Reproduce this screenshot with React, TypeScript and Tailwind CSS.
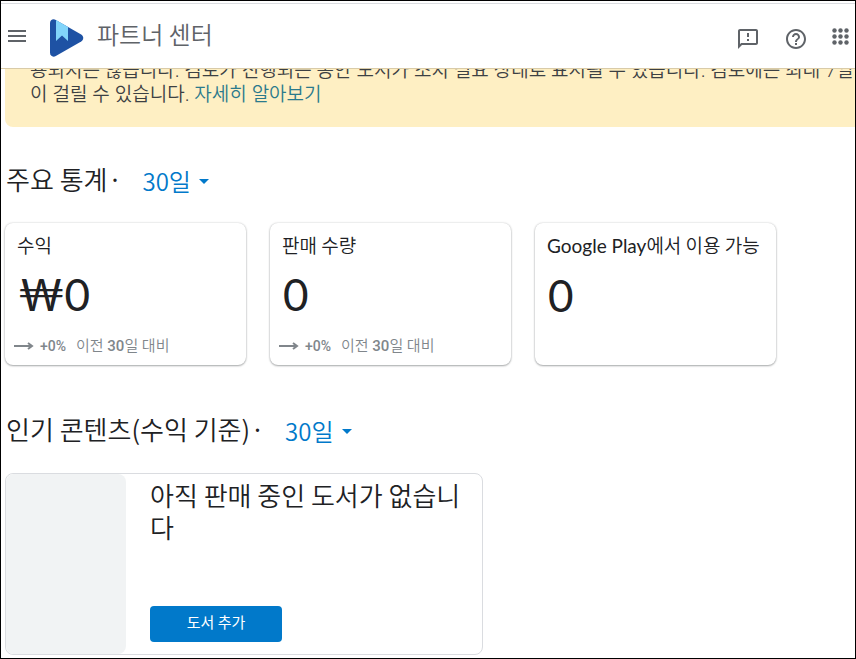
import { useId, type ReactNode } from "react";

const KR = "font-['Noto_Sans_CJK_KR',sans-serif]";
const NOTICE = "font-['Noto_Sans','Noto_Sans_CJK_KR',sans-serif]";
const LATIN = "font-[Lato,'Noto_Sans_CJK_KR',sans-serif]";
const SMALL = "font-[Roboto,'Noto_Sans_CJK_KR',sans-serif]";

function BooksLogo() {
  return (
    <svg width="34" height="38" viewBox="0 0 34 38" aria-hidden="true">
      <path
        d="M0 4.2C0 1 3 -0.6 5.8 1L31.2 15.6C33.9 17.2 33.9 20.8 31.2 22.4L5.8 37C3 38.6 0 37 0 33.8Z"
        fill="#1e52a4"
      />
      <path d="M6 1.1L18 8V22L12 16.6L6 22Z" fill="#81d4fa" />
    </svg>
  );
}

function Header() {
  return (
    <header className="relative z-10 flex h-[65px] items-center border-b border-[#d9cba8] bg-white pr-1.5 pl-1.5 text-[#5f6368]">
      <button type="button" aria-label="메뉴" className="flex w-5 justify-center">
        <svg width="18" height="12" viewBox="0 0 18 12" fill="currentColor">
          <path d="M0 0h18v2H0zM0 5h18v2H0zM0 10h18v2H0z" />
        </svg>
      </button>
      <a href="#" className="ml-[23px] flex items-start gap-[13px] pt-1">
        <BooksLogo />
        <span className="text-2xl leading-[30px] font-[350]">파트너 센터</span>
      </a>
      <div className="ml-auto flex items-center pt-1.5">
        <button type="button" aria-label="의견 보내기">
          <svg width="24" height="24" viewBox="0 0 24 24" fill="currentColor">
            <path d="M20 2H4c-1.100 0-1.990.9-1.990 2L2 22l4-4h14c1.100 0 2-.9 2-2V4c0-1.100-.9-2-2-2zm0 14H5.170l-.59.590-.58.580V4h16v12zm-9-4h2v2h-2zm0-6h2v4h-2z" />
          </svg>
        </button>
        <button type="button" aria-label="도움말" className="ml-6">
          <svg width="24" height="24" viewBox="0 0 24 24" fill="currentColor">
            <path d="M11 18h2v-2h-2v2zm1-16C6.480 2 2 6.480 2 12s4.480 10 10 10 10-4.480 10-10S17.520 2 12 2zm0 18c-4.410 0-8-3.590-8-8s3.590-8 8-8 8 3.590 8 8-3.590 8-8 8zm0-14c-2.210 0-4 1.790-4 4h2c0-1.100.9-2 2-2s2 .9 2 2c0 2-3 1.750-3 5h2c0-2.250 3-2.500 3-5 0-2.210-1.790-4-4-4z" />
          </svg>
        </button>
        <button type="button" aria-label="Google 앱" className="mb-1.5 ml-6">
          <svg width="17" height="17" viewBox="0 0 17 17" fill="currentColor">
            {[2.5, 8.5, 14.5].map((cy) =>
              [2.5, 8.5, 14.5].map((cx) => <circle key={`${cx}-${cy}`} cx={cx} cy={cy} r="2.2" />)
            )}
          </svg>
        </button>
      </div>
    </header>
  );
}

function Notice() {
  return (
    <div
      className={`-mt-4 ml-1 rounded-bl-lg bg-[#feefc3] pt-[5px] pb-[21px] pl-[25px] text-[19px] leading-6 font-[350] whitespace-nowrap text-[#3c4043] ${NOTICE}`}
    >
      <p>
        용되지는 않습니다. 검토가 진행되는 동안 도서가 조치 필요 상태로 표시될 수 있습니다. 검토에는 최대 7일
        <br />이 걸릴 수 있습니다.{" "}
        <a href="#" className="text-[#2b7a8c]">
          자세히 알아보기
        </a>
      </p>
    </div>
  );
}

function SectionTitle({ title }: { title: string }) {
  const id = useId();
  return (
    <div className="flex items-center gap-6 pl-[5px]">
      <h2 className="text-[26px] leading-9 font-[350] text-[#202124]">
        <label htmlFor={id} className="flex gap-1 pb-1">
          {title} <span className={`font-normal ${NOTICE}`}>·</span>
        </label>
      </h2>
      <div className="flex items-center text-[#0179ca]">
        <select id={id} className="appearance-none bg-transparent pr-5 text-2xl leading-9 font-[350]">
          <option>30일</option>
        </select>
        <svg className="pointer-events-none -ml-3" width="10" height="5" viewBox="0 0 10 5" fill="currentColor">
          <path d="M0 0h10L5 5z" />
        </svg>
      </div>
    </div>
  );
}

function StatCard({ label, value, change }: { label: ReactNode; value: string; change?: boolean }) {
  return (
    <article className="flex h-[142px] w-[241px] flex-col rounded-lg bg-white px-3 shadow-[0_1px_2px_rgba(60,64,67,0.4),0_0_2px_rgba(60,64,67,0.25)]">
      <h3 className="mt-2 text-[19px] leading-7 font-[350] whitespace-nowrap text-[#202124]">{label}</h3>
      <p className={`mt-2 h-[54px] pl-px text-[44px] leading-[54px] text-[#202124] ${LATIN}`}>{value}</p>
      {change && (
        <p className={`-ml-1 mt-[15px] flex items-center gap-1.5 pl-px text-sm leading-5 text-[#80868b] ${SMALL}`}>
          <svg width="20" height="8" viewBox="0 0 20 8" fill="none" stroke="currentColor" strokeWidth="2">
            <path d="M0 4h18M14 1l4 3-4 3" />
          </svg>
          <span className="font-medium">+0%</span>
          <span className="ml-1 text-[15px] font-[350]">
            이전 <b className="font-medium">30</b>일 대비
          </span>
        </p>
      )}
    </article>
  );
}

export default function App() {
  return (
    <div className={`min-h-screen overflow-hidden border border-black bg-white ${KR}`}>
      <div className="h-[3px] border-b border-[#dadce0]" />
      <Header />
      <main>
        <Notice />
        <section className="mt-[34px]">
          <SectionTitle title="주요 통계" />
          <div className="mt-[22px] ml-1 flex flex-wrap gap-6">
            <StatCard label="수익" value="₩0" change />
            <StatCard label="판매 수량" value="0" change />
            <StatCard
              label={
                <>
                  <span className={`font-normal ${LATIN}`}>Google Play</span>에서 이용 가능
                </>
              }
              value="0"
            />
          </div>
        </section>
        <section className="mt-[46px]">
          <SectionTitle title="인기 콘텐츠(수익 기준)" />
          <div className="mt-[22px] mb-[3px] ml-1 flex h-[182px] max-w-[478px] rounded-lg border border-[#dadce0]">
            <div className="w-[120px] shrink-0 rounded-lg bg-[#f1f3f4]" />
            <div className="flex flex-col items-start pr-3 pb-3 pl-6">
              <h3 className="mt-[5px] text-[26px] leading-8 font-[350] break-all text-[#202124]">
                아직 판매 중인 도서가 없습니다
              </h3>
              <button type="button" className="mt-auto h-9 w-33 rounded-sm bg-[#0179ca] pb-1 text-[15px] text-white">
                도서 추가
              </button>
            </div>
          </div>
        </section>
      </main>
    </div>
  );
}
